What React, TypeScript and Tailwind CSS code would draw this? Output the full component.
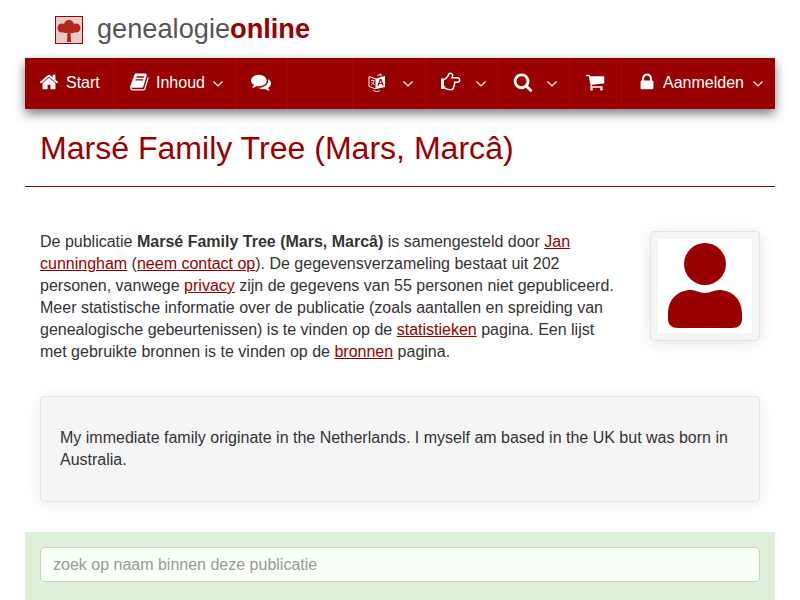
import type { ReactNode } from "react";

const ICONS: Record<string, string> = {
  home: "M1472 992v480q0 26-19 45t-45 19h-384v-384h-256v384h-384q-26 0-45-19t-19-45v-480q0-1 .5-3t.5-3l575-474 575 474q1 2 1 6zm223-69l-62 74q-8 9-21 11h-3q-13 0-21-7l-692-577-692 577q-12 8-24 7-13-2-21-11l-62-74q-8-10-7-23.5t11-21.5l719-599q32-26 76-26t76 26l244 204v-195q0-14 9-23t23-9h192q14 0 23 9t9 23v408l219 182q10 8 11 21.5t-7 23.5z",
  book: "M1639 478q40 57 18 129l-275 906q-19 64-76.5 107.5t-122.5 43.5h-923q-77 0-148.5-53.5t-99.5-131.5q-24-67-2-127 0-4 3-27t4-37q1-8-3-21.5t-3-19.5q2-11 8-21t16.5-23.5 16.5-23.5q23-38 45-91.5t30-91.5q3-10 .5-30t-.5-28q3-11 17-28t17-23q21-36 42-92t25-90q1-9-2.5-32t.5-28q4-13 22-30.5t22-22.5q19-26 42.5-84.5t27.5-96.5q1-8-3-25.5t-2-26.5q2-8 9-18t18-23 17-21q8-12 16.5-30.5t15-35 16-36 19.5-32 26.5-23.5 36-11.5 47.5 5.5l-1 3q38-9 51-9h761q74 0 114 56t18 130l-274 906q-36 119-71.5 153.5t-128.5 34.5h-869q-27 0-38 15-11 16-1 43 24 70 144 70h923q29 0 56-15.5t35-41.5l300-987q7-22 5-57 38 15 59 43zm-1064 2q-4 13 2 22.5t20 9.5h608q13 0 25.5-9.5t16.5-22.5l21-64q4-13-2-22.5t-20-9.5h-608q-13 0-25.5 9.5t-16.5 22.5zm-83 256q-4 13 2 22.5t20 9.5h608q13 0 25.5-9.5t16.5-22.5l21-64q4-13-2-22.5t-20-9.5h-608q-13 0-25.5 9.5t-16.5 22.5z",
  comments: "M1408 768q0 139-94 257t-256.5 186.5-353.5 68.5q-86 0-176-16-124 88-278 128-36 9-86 16h-3q-11 0-20.5-8t-11.5-21q-1-3-1-6.5t.5-6.5 2-6l2.5-5 3.5-5.5 4-5 4.5-5 4-4.5q5-6 23-25t26-29.5 22.5-29 25-38.5 20.5-44q-124-72-195-177t-71-224q0-139 94-257t256.5-186.5 353.5-68.5 353.5 68.5 256.5 186.5 94 257zm384 256q0 120-71 224.5t-195 176.5q10 24 20.5 44t25 38.5 22.5 29 26 29.5 23 25q1 1 4 4.5t4.5 5 4 5 3.5 5.5l2.5 5 2 6 .5 6.5-1 6.5q-3 14-13 22t-22 7q-50-7-86-16-154-40-278-128-90 16-176 16-271 0-472-132 58 4 88 4 161 0 309-45t264-129q125-92 192-212t67-254q0-77-23-152 129 71 204 178t75 230z",
  cart: "M704 1536q0 52-38 90t-90 38-90-38-38-90 38-90 90-38 90 38 38 90zm896 0q0 52-38 90t-90 38-90-38-38-90 38-90 90-38 90 38 38 90zm128-1088v512q0 24-16.5 42.5t-40.5 21.5l-1044 122q13 60 13 70 0 16-24 64h920q26 0 45 19t19 45-19 45-45 19h-1024q-26 0-45-19t-19-45q0-11 8-31.5t16-36 21.5-40 15.5-29.5l-177-823h-204q-26 0-45-19t-19-45 19-45 45-19h256q16 0 28.5 6.5t19.5 15.5 13 24.5 8 26 5.5 29.5 4.5 26h1201q26 0 45 19t19 45z",
  search: "M1216 832q0-185-131.5-316.5t-316.5-131.5-316.5 131.5-131.5 316.5 131.5 316.5 316.5 131.5 316.5-131.5 131.5-316.5zm512 832q0 52-38 90t-90 38q-54 0-90-38l-343-342q-179 124-399 124-143 0-273.5-55.5t-225-150-150-225-55.5-273.5 55.5-273.5 150-225 225-150 273.5-55.5 273.5 55.5 225 150 150 225 55.5 273.5q0 220-124 399l343 343q37 37 37 90z",
  lock: "M640 768h512v-192q0-106-75-181t-181-75-181 75-75 181v192zm832 96v576q0 40-28 68t-68 28h-960q-40 0-68-28t-28-68v-576q0-40 28-68t68-28h32v-192q0-184 132-316t316-132 316 132 132 316v192h32q40 0 68 28t28 68z",
  hand: "M384 1344q0-26-19-45t-45-19-45 19-19 45 19 45 45 19 45-19 19-45zm1152-576q0-51-39-89.5t-89-38.5h-576q0-20 15-48.5t33-55 33-68 15-84.5q0-67-44.5-97.5t-115.5-30.5q-24 0-90 139-24 44-37 65-40 64-112 145-71 81-101 106-69 57-140 57h-32v640h32q72 0 167 32t193.5 64 179.5 32q189 0 189-167 0-26-5-56 30-16 47.5-52.5t17.5-73.5-18-69q53-50 53-119 0-25-10-55.5t-25-47.5h331q52 0 90-38t38-90zm128-1q0 105-76 181t-181 76h-169q-4 62-37 119 3 21 3 43 0 101-60 178 1 139-85 219.5t-227 80.5q-133 0-322-69-164-59-223-59h-288q-53 0-90.5-37.5t-37.5-90.5v-640q0-53 37.5-90.5t90.5-37.5h288q10 0 21.5-4.5t23.5-14 22.5-18 24-22.5 20.5-21.5 19-21.5 14-17q65-74 100-129 13-21 33-62t37-72 40.5-63 55-49.5 69.5-17.5q125 0 206.5 67t81.5 189q0 68-22 128h374q104 0 180 76t76 179z",
};

function Icon({ name, className, size = 20 }: { name: string; className?: string; size?: number }) {
  return (
    <svg width={size} height={size} viewBox="0 0 1792 1792" fill="#fff" className={className}>
      <path d={ICONS[name]} />
    </svg>
  );
}

function Chevron({ className }: { className?: string }) {
  return (
    <svg width="10" height="6" viewBox="0 0 10 6" fill="none" className={`mt-[2px] ${className ?? ""}`}>
      <path d="M0.5 0.5 L5 5 L9.5 0.5" stroke="#fff" strokeWidth="1.2" />
    </svg>
  );
}

function Lang() {
  return (
    <svg width="18" height="20" viewBox="0 0 18 20" fill="none">
      <path d="M1 3.5 L8 6 V16 L1 13.5 Z" stroke="#fff" strokeWidth="1" />
      <path d="M8 5.5 L17 3 V14 L8 16 Z" fill="#fff" />
      <path d="M9.5 2.5 L13 1 V3.5" stroke="#fff" strokeWidth="1" />
      <path d="M3 7.5 H6.5 M4.7 6.5 V7.5 M6 7.5 C5.5 10 4.5 11 3 12 M3.8 9 C4.5 10.5 5.5 11 6.5 11.5" stroke="#fff" strokeWidth="0.8" />
      <path d="M10 12.8 L12.3 6.5 H13 L15.3 12.5 M11 10.5 H14.3" stroke="#990000" strokeWidth="1.2" />
      <path d="M5 17 C7 19 10 19 12 17.5" stroke="#fff" strokeWidth="0.9" />
    </svg>
  );
}

function NavItem({ w, children, last }: { w: string; children?: ReactNode; last?: boolean }) {
  return (
    <div className={`${w} h-full pb-[2px] flex items-center ${last ? "" : "border-r border-[#b00000]"}`}>{children}</div>
  );
}

export default function App() {
  return (
    <div className="w-[800px] h-[600px] overflow-hidden bg-white text-[16px] leading-[22px] text-[#333333] font-['Liberation_Sans',Arial,sans-serif]">
      <div className="h-[58px] pl-[55px] pt-[16px] flex items-start">
        <div className="w-[28px] h-[28px] border border-[#990000] bg-[#e6cbc8] flex items-center justify-center">
          <svg width="26" height="26" viewBox="0 0 26 26" fill="#b3261a">
            <circle cx="6" cy="11" r="4.5" />
            <circle cx="13" cy="8" r="5" />
            <circle cx="20" cy="11" r="4.5" />
            <circle cx="10" cy="12" r="4" />
            <circle cx="16" cy="12" r="4" />
            <path d="M11.5 13 H14.5 L15 25 H11 Z" />
          </svg>
        </div>
        <div className="ml-[14px] -mt-[1px] text-[27.2px] leading-[27px] text-[#555555]">
          genealogie<span className="font-bold text-[#990000]">online</span>
        </div>
      </div>

      <div className="mx-[25px] h-[51px] bg-[#990000] flex items-center text-white shadow-[0_5px_10px_rgba(0,0,0,0.5)]">
        <NavItem w="w-[89px]">
          <Icon name="home" className="ml-[14px] mb-[2px]" />
          <span className="ml-[7px]">Start</span>
        </NavItem>
        <NavItem w="w-[122px]">
          <Icon name="book" className="ml-[16px] mb-[2px]" />
          <span className="ml-[6px]">Inhoud</span>
          <Chevron className="ml-[8px]" />
        </NavItem>
        <NavItem w="w-[52px]">
          <Icon name="comments" className="ml-[15px] mb-[2px]" />
        </NavItem>
        <NavItem w="w-[65px]" />
        <NavItem w="w-[73px]">
          <span className="ml-[15px]"><Lang /></span>
          <Chevron className="ml-[17px]" />
        </NavItem>
        <NavItem w="w-[72px]">
          <Icon name="hand" size={21} className="ml-[15px] mb-[2px]" />
          <Chevron className="ml-[14px]" />
        </NavItem>
        <NavItem w="w-[72px]">
          <Icon name="search" className="ml-[15px] mb-[2px]" />
          <Chevron className="ml-[14px]" />
        </NavItem>
        <NavItem w="w-[52px]">
          <Icon name="cart" className="ml-[15px] mb-[2px]" />
        </NavItem>
        <NavItem w="w-[153px]" last>
          <Icon name="lock" className="ml-[15px] mb-[2px]" />
          <span className="ml-[6px]">Aanmelden</span>
          <Chevron className="ml-[9px]" />
        </NavItem>
      </div>

      <div className="mx-[25px] h-[78px] border-b border-[#990000] px-[15px] pt-[21px]">
        <h1 className="text-[32.05px] leading-[36px] text-[#990000]">Marsé Family Tree (Mars, Marcâ)</h1>
      </div>

      <div className="mx-[25px] px-[15px] pt-[44px] flex justify-between items-start">
        <p className="w-[580px]">
          De publicatie <b>Marsé Family Tree (Mars, Marcâ)</b> is samengesteld door <a className="underline text-[#990000]">Jan cunningham</a> (<a className="underline text-[#990000]">neem contact op</a>). De gegevensverzameling bestaat uit 202 personen, vanwege <a className="underline text-[#990000]">privacy</a> zijn de gegevens van 55 personen niet gepubliceerd. Meer statistische informatie over de publicatie (zoals aantallen en spreiding van genealogische gebeurtenissen) is te vinden op de <a className="underline text-[#990000]">statistieken</a> pagina. Een lijst met gebruikte bronnen is te vinden op de <a className="underline text-[#990000]">bronnen</a> pagina.
        </p>
        <div className="w-[110px] h-[110px] border border-[#e3e3e3] rounded-[4px] bg-[#f5f5f5] p-[7px] shadow-[0_2px_15px_rgba(0,0,0,0.1)]">
          <div className="w-full h-full bg-white flex items-start justify-center">
            <svg width="94" height="94" viewBox="0 0 94 94">
              <circle cx="47" cy="25" r="21" fill="#990000" />
              <path d="M10 75 C10 60 20 51 33 51 C38 51 41 54 47 54 C53 54 56 51 61 51 C74 51 84 60 84 75 L84 80 C84 86 80 89 74 89 L20 89 C14 89 10 86 10 80 Z" fill="#990000" />
            </svg>
          </div>
        </div>
      </div>

      <div className="mx-[40px] mt-[33px] h-[106px] border border-[#e3e3e3] rounded-[4px] bg-[#f5f5f5] px-[19px] pt-[30px] shadow-[0_2px_15px_rgba(0,0,0,0.08)]">
        My immediate family originate in the Netherlands. I myself am based in the UK but was born in Australia.
      </div>

      <div className="mx-[25px] mt-[30px] h-[68px] bg-[#dff0d8] px-[15px] pt-[15px]">
        <input
          placeholder="zoek op naam binnen deze publicatie"
          className="w-full h-[35px] border border-[#cccccc] rounded-[4px] bg-[#f8fff6] px-[12px] text-[16px] outline-none placeholder:text-[#999999]"
        />
      </div>
    </div>
  );
}
